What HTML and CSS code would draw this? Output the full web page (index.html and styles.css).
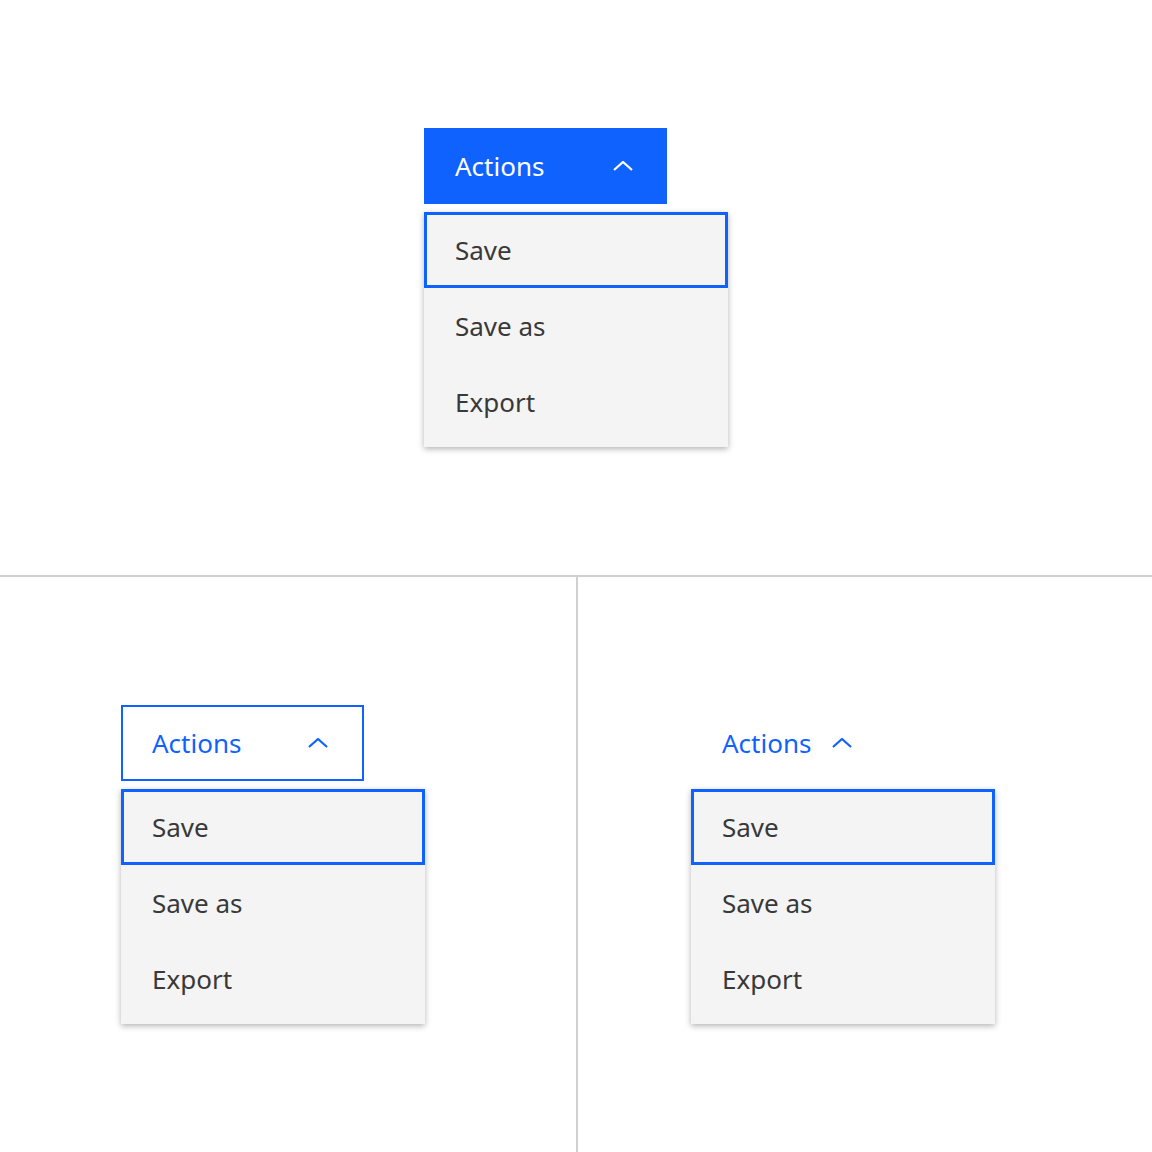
FILE: index.html
```html
<!DOCTYPE html>
<html lang="en">
<head>
  <meta charset="UTF-8" />
  <title>Menu button variants</title>
  <link rel="stylesheet" href="styles.css">
</head>
<body>
  <div class="page">
    <!-- primary -->
    <section class="cell cell-top">
      <div class="group">
        <button class="trigger trigger-primary">
          <span>Actions</span>
          <svg class="chevron" viewBox="0 0 20 10" width="20" height="10"><path d="M1 9 L10 1 L19 9" /></svg>
        </button>
        <ul class="menu">
          <li class="item item-focus">Save</li>
          <li class="item">Save as</li>
          <li class="item">Export</li>
        </ul>
      </div>
    </section>

    <div class="bottom">
      <!-- tertiary -->
      <section class="cell cell-left">
        <div class="group">
          <button class="trigger trigger-tertiary">
            <span>Actions</span>
            <svg class="chevron" viewBox="0 0 20 10" width="20" height="10"><path d="M1 9 L10 1 L19 9" /></svg>
          </button>
          <ul class="menu">
            <li class="item item-focus">Save</li>
            <li class="item">Save as</li>
            <li class="item">Export</li>
          </ul>
        </div>
      </section>

      <!-- ghost -->
      <section class="cell cell-right">
        <div class="group">
          <button class="trigger trigger-ghost">
            <span>Actions</span>
            <svg class="chevron" viewBox="0 0 20 10" width="20" height="10"><path d="M1 9 L10 1 L19 9" /></svg>
          </button>
          <ul class="menu">
            <li class="item item-focus">Save</li>
            <li class="item">Save as</li>
            <li class="item">Export</li>
          </ul>
        </div>
      </section>
    </div>
  </div>
</body>
</html>
```

FILE: styles.css
```css
* {
    box-sizing: border-box;
}
body {
    margin: 0;
    background: #fff;
    font-family: "Noto Sans", "Open Sans", sans-serif;
}
.page {
    width: 1152px;
    height: 1152px;
    display: flex;
    flex-direction: column;
}
.cell {
    display: flex;
    align-items: center;
}
.cell-top {
    height: 577px;
    justify-content: center;
    border-bottom: 2px solid #d0d0d0;
}
.bottom {
    flex: 1;
    display: grid;
    grid-template-columns: 578px 1fr;
}
.cell-left {
    padding-left: 121px;
    border-right: 2px solid #d0d0d0;
}
.cell-right {
    padding-left: 113px;
}
.group {
    width: 304px;
}
.trigger {
    display: flex;
    align-items: center;
    justify-content: space-between;
    width: 243px;
    height: 76px;
    padding: 0 34px 0 31px;
    margin: 0 0 8px;
    border: 0;
    font-family: inherit;
    font-size: 26px;
    background: none;
    cursor: pointer;
}
.chevron {
    fill: none;
    stroke: currentColor;
    stroke-width: 2.2;
}
.trigger-primary {
    background: #0f62fe;
    color: #fff;
}
.trigger-tertiary {
    border: 2px solid #0f62fe;
    color: #0f62fe;
    padding-left: 29px;
    padding-right: 34px;
}
.trigger-ghost {
    color: #0f62fe;
    width: auto;
    gap: 21px;
    justify-content: flex-start;
}
.menu {
    list-style: none;
    margin: 0;
    padding: 0 0 7px;
    background: #f4f4f4;
    box-shadow: 0 2px 6px rgba(0, 0, 0, 0.3);
}
.item {
    height: 76px;
    display: flex;
    align-items: center;
    padding-left: 31px;
    font-size: 26px;
    color: #393939;
}
.item-focus {
    border: 3px solid #0f62fe;
    padding-left: 28px;
}
```
